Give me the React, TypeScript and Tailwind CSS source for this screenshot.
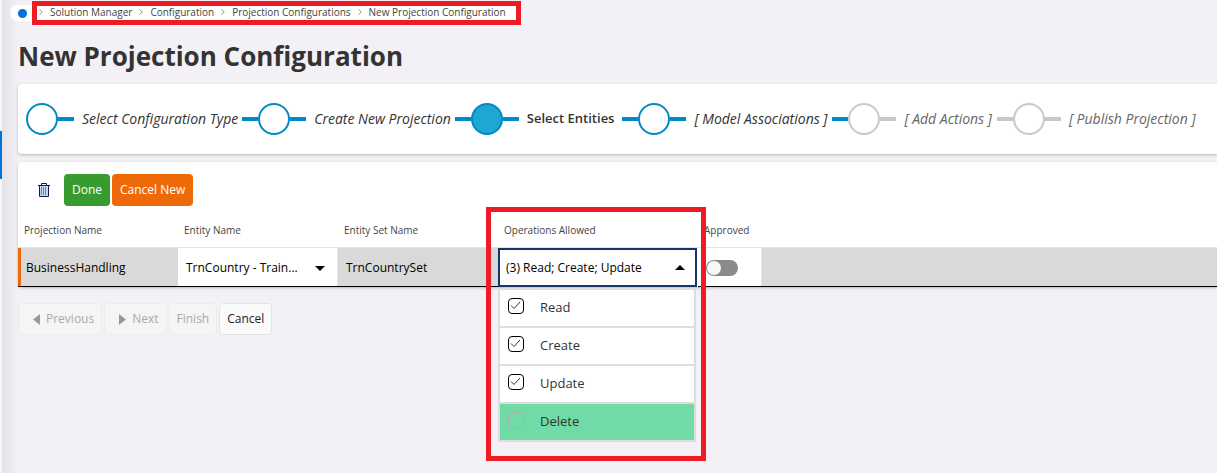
import React, { useState } from 'react';
import { ChevronRight } from 'lucide-react';

type StepState = 'done' | 'current' | 'open' | 'locked';

interface Step {
  label: string;
  state: StepState;
}

const crumbs = ['Solution Manager', 'Configuration', 'Projection Configurations', 'New Projection Configuration'];

const steps: Step[] = [
  { label: 'Select Configuration Type', state: 'done' },
  { label: 'Create New Projection', state: 'done' },
  { label: 'Select Entities', state: 'current' },
  { label: '[ Model Associations ]', state: 'open' },
  { label: '[ Add Actions ]', state: 'locked' },
  { label: '[ Publish Projection ]', state: 'locked' },
];

const operations = ['Read', 'Create', 'Update', 'Delete'];

const circleStyles: Record<StepState, string> = {
  done: 'border-[#0089c4] bg-white',
  current: 'border-[#0089c4] bg-[#1ea7d2]',
  open: 'border-[#0089c4] bg-white',
  locked: 'border-[#c8c8c8] bg-white',
};

const labelStyles: Record<StepState, string> = {
  done: 'pr-1 pb-[2px] text-[14px] italic text-[#333]',
  current: 'pr-2 text-[13px] font-semibold text-[#333]',
  open: 'pr-[5px] pb-[2px] text-[14px] italic text-[#333]',
  locked: 'pr-[5px] pb-[2px] text-[14px] italic text-[#666]',
};

const lineColor = (state: StepState) => (state === 'locked' ? 'bg-[#c8c8c8]' : 'bg-[#0089c4]');

const TrashIcon = () => (
  <svg width="12" height="14" viewBox="0 0 12 14" fill="none" aria-hidden="true">
    <path d="M2 3h8v10H2z" fill="#c3dcf5" />
    <path d="M3.5 4v8M5.5 4v8M7.5 4v8" stroke="#3f8fdc" />
    <path d="M0 2.5h12M3.5 2V.5h5V2" stroke="#1b1b2b" />
    <path d="M1.5 3v10.5h9V3" stroke="#1b1b4b" />
  </svg>
);

const Breadcrumbs = () => (
  <nav aria-label="Breadcrumb" className="flex h-4 w-fit items-center rounded-l-full bg-white pl-2 text-[10px] leading-[14px] text-[#444]">
    <span className="h-[9px] w-[9px] rounded-full bg-[#0073d9]" />
    <ol className="flex items-center pr-[10px] pb-[2px] pl-[5px]">
      {crumbs.map(crumb => (
        <li key={crumb} className="flex items-center">
          <ChevronRight size={10} strokeWidth={2} className="mx-1 text-[#777]" />
          <a href="#">{crumb}</a>
        </li>
      ))}
    </ol>
  </nav>
);

const Stepper = () => (
  <ol className="flex h-[70px] items-center rounded-l bg-white pl-2 shadow-[0_1px_3px_rgba(0,0,0,0.25)]">
    {steps.map((step, i) => (
      <li key={step.label} className="flex items-center" aria-current={step.state === 'current' ? 'step' : undefined}>
        {i > 0 && <span className={`h-1 w-4 ${lineColor(steps[i - 1].state)}`} />}
        <span className={`h-8 w-8 rounded-full border-2 ${circleStyles[step.state]}`} />
        <span className={`h-1 w-4 ${lineColor(step.state)}`} />
        <span className={`pl-2 whitespace-nowrap ${labelStyles[step.state]}`}>{step.label}</span>
      </li>
    ))}
  </ol>
);

interface OperationsMenuProps {
  selected: string[];
  onToggle: (name: string) => void;
}

const OperationsMenu: React.FC<OperationsMenuProps> = ({ selected, onToggle }) => (
  <ul className="absolute top-full left-0 z-10 mt-px w-[198px] border-2 border-b-0 border-[#ddd] bg-white">
    {operations.map(name => {
      const checked = selected.includes(name);
      return (
        <li key={name} className="border-b-2 border-[#ddd]">
          <label className={`flex h-9 items-center gap-4 pl-2 text-[13px] text-[#333] ${checked ? '' : 'bg-[#71dba7]'}`}>
            <span className="mb-1 grid h-4 w-4">
              <input
                type="checkbox"
                checked={checked}
                onChange={() => onToggle(name)}
                className={`col-start-1 row-start-1 h-4 w-4 appearance-none rounded border ${checked ? 'border-black' : 'border-[#aab0ad]'}`}
              />
              {checked && (
                <svg viewBox="0 0 16 16" fill="none" className="pointer-events-none col-start-1 row-start-1 h-4 w-4" aria-hidden="true">
                  <path d="M3 7.5l3 3L12 4" stroke="#333" strokeWidth="1" />
                </svg>
              )}
            </span>
            {name}
          </label>
        </li>
      );
    })}
  </ul>
);

const App: React.FC = () => {
  const [open, setOpen] = useState(true);
  const [selected, setSelected] = useState(['Read', 'Create', 'Update']);
  const [approved, setApproved] = useState(false);

  const toggle = (name: string) =>
    setSelected(operations.filter(o => (o === name ? !selected.includes(o) : selected.includes(o))));

  return (
    <div className="flex min-h-screen bg-[#f3f1f5] font-['Open_Sans',sans-serif] text-[#333]">
      <div className="w-[2px] shrink-0 bg-[#f7f7f9] pt-[131px]">
        <div className="h-12 bg-[#0073d9]" />
      </div>
      <div className="w-4 shrink-0 bg-linear-to-r from-[#e4e2e6] to-[#f3f1f5]" />

      <main className="min-w-0 flex-1 pt-[5px]">
        <div className="relative -ml-2 w-fit">
          <Breadcrumbs />
          <div className="pointer-events-none absolute -top-1 -right-[5px] -bottom-1 left-[22px] border-5 border-[#ed1c24]" />
        </div>

        <h1 className="pt-[17px] text-[26px] leading-9 font-bold">New Projection Configuration</h1>

        <div className="mt-[10px]">
          <Stepper />
        </div>

        <section className="mt-2 rounded-l bg-white pt-3 shadow-[0_1px_3px_rgba(0,0,0,0.25)]">
          <div className="flex items-center gap-[2px] text-[12px] text-white">
            <button type="button" aria-label="Delete row" className="flex h-8 w-11 items-center justify-end pr-3 pl-5">
              <TrashIcon />
            </button>
            <button type="button" className="h-8 rounded bg-[#379b30] px-2">Done</button>
            <button type="button" className="h-8 rounded bg-[#ee6a08] px-2">Cancel New</button>
          </div>

          <table className="mt-2 w-full table-fixed border-collapse text-left text-[12px]">
            <colgroup>
              <col className="w-40" />
              <col className="w-40" />
              <col className="w-40" />
              <col className="w-[200px]" />
              <col className="w-16" />
              <col />
            </colgroup>
            <thead>
              <tr className="h-[34px] text-[10px] text-[#444] shadow-[inset_0_-1px_0_#e4e4e4]">
                <th className="px-[6px] pb-[2px] font-normal">Projection Name</th>
                <th className="px-[6px] pb-[2px] font-normal">Entity Name</th>
                <th className="px-[6px] pb-[2px] font-normal">Entity Set Name</th>
                <th className="relative px-[6px] pb-[2px] font-normal">
                  Operations Allowed
                  <div className="pointer-events-none absolute -top-[7px] -left-3 z-20 h-[254px] w-[220px] border-5 border-[#ed1c24]" />
                </th>
                <th className="px-[6px] pb-[2px] font-normal">Approved</th>
                <th />
              </tr>
            </thead>
            <tbody>
              <tr className="h-[39px] bg-[#d9d9d9] text-black shadow-[inset_0_-1px_0_#000]">
                <td className="p-0">
                  <div className="mb-px flex h-[38px] items-center border-l-3 border-[#ee6a08] pt-[2px] pl-[5px]">BusinessHandling</div>
                </td>
                <td className="p-0">
                  <div className="mb-px grid h-[38px] items-center border-r border-[#e4e4e4] bg-white pt-[2px]">
                    <select aria-label="Entity Name" className="col-start-1 row-start-1 h-full w-full appearance-none pr-8 pl-2">
                      <option>TrnCountry - Train...</option>
                    </select>
                    <svg width="10" height="5" viewBox="0 0 10 5" className="pointer-events-none col-start-1 row-start-1 mr-3 justify-self-end" aria-hidden="true">
                      <path d="M0 0h10L5 5z" />
                    </svg>
                  </div>
                </td>
                <td className="px-2 py-0">TrnCountrySet</td>
                <td className="p-0">
                  <div className="relative flex h-[39px] bg-white">
                    <button
                      type="button"
                      aria-haspopup="true"
                      aria-expanded={open}
                      onClick={() => setOpen(!open)}
                      className="flex w-[199px] items-center justify-between border-2 border-[#16356b] bg-white pr-[10px] pl-[6px]"
                    >
                      ({selected.length}) {selected.join('; ')}
                      <svg width="10" height="5" viewBox="0 0 10 5" aria-hidden="true">
                        <path d="M0 5h10L5 0z" />
                      </svg>
                    </button>
                    {open && <OperationsMenu selected={selected} onToggle={toggle} />}
                  </div>
                </td>
                <td className="p-0">
                  <div className="mb-px flex h-[38px] items-center border-r border-[#e4e4e4] bg-white pt-[2px] pl-2">
                    <input
                      type="checkbox"
                      role="switch"
                      aria-label="Approved"
                      checked={approved}
                      onChange={() => setApproved(!approved)}
                      className="flex h-4 w-8 appearance-none items-center rounded-full bg-[#8a8a8a] px-px before:h-[14px] before:w-[14px] before:rounded-full before:bg-[#f8f8f8] checked:justify-end checked:bg-[#379b30]"
                    />
                  </div>
                </td>
                <td />
              </tr>
            </tbody>
          </table>
        </section>

        <div className="mt-4 flex gap-[2px] text-[12px]">
          <button type="button" disabled className="flex h-8 items-center gap-[6px] rounded border border-[#ebebeb] bg-[#f5f5f5] pr-[7px] pl-[14px] text-[#aaa]">
            <svg width="7" height="11" viewBox="0 0 7 11" fill="#999" aria-hidden="true">
              <path d="M7 0v11L0 5.5z" />
            </svg>
            Previous
          </button>
          <button type="button" disabled className="flex h-8 items-center gap-[6px] rounded border border-[#ebebeb] bg-[#f5f5f5] pr-[7px] pl-[14px] text-[#aaa]">
            <svg width="7" height="11" viewBox="0 0 7 11" fill="#999" aria-hidden="true">
              <path d="M0 0v11l7-5.5z" />
            </svg>
            Next
          </button>
          <button type="button" disabled className="h-8 rounded border border-[#ebebeb] bg-[#f5f5f5] px-[7px] text-[#aaa]">Finish</button>
          <button type="button" className="h-8 rounded border border-[#e4e4e4] bg-[#fafafa] px-[7px] text-[#222]">Cancel</button>
        </div>
      </main>
    </div>
  );
};

export default App;
